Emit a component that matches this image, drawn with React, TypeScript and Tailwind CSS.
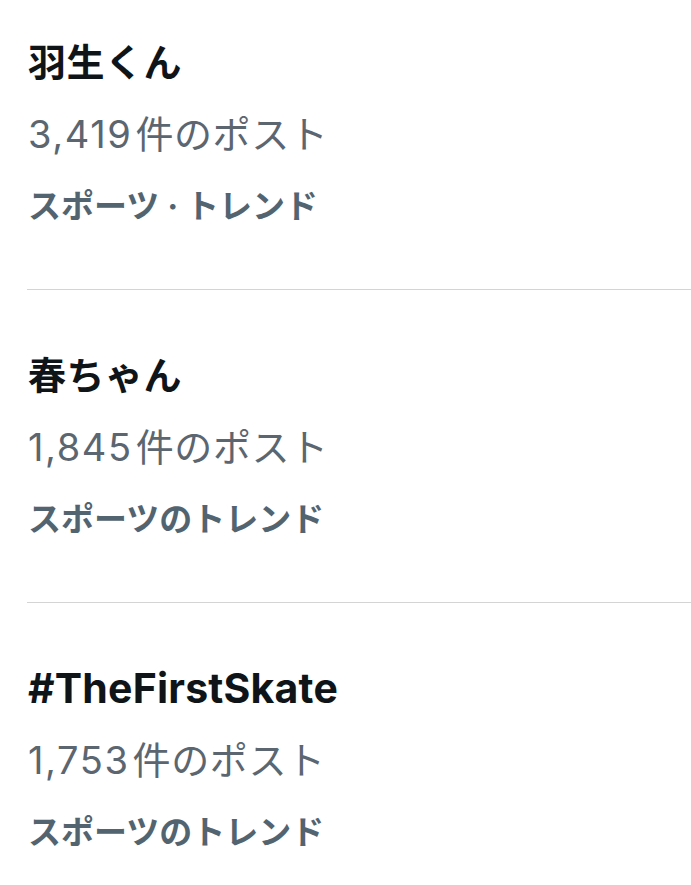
const trends = [
  { title: "羽生くん", count: "3,419", category: "スポーツ · トレンド", latin: false },
  { title: "春ちゃん", count: "1,845", category: "スポーツのトレンド", latin: false },
  { title: "#TheFirstSkate", count: "1,753", category: "スポーツのトレンド", latin: true },
];

const font = "font-['Inter','Noto_Sans_CJK_JP',sans-serif]";

export default function App() {
  return (
    <div className={`min-h-[885px] w-[691px] overflow-hidden bg-white ${font}`}>
      {trends.map((t, idx) => (
        <div key={idx}>
          {idx > 0 && <div className="ml-[27px] h-px bg-[#d4d4d4]" />}
          <div className={`pl-[28px] ${idx === 0 ? "pt-[26px]" : "pt-[49px]"} pb-[47px]`}>
            <div
              className={`h-[72px] leading-[72px] font-bold text-[#0f1419] ${
                t.latin ? "text-[41px] tracking-[0.2px]" : "text-[38px] tracking-[0.5px]"
              }`}
            >
              {t.title}
            </div>
            <div className="h-[72px] text-[38px] leading-[72px] text-[#5b6670]">
              <span className="tracking-[1.6px]">{t.count}</span>
              <span className="ml-[3px] tracking-[0.6px]">件のポスト</span>
            </div>
            <div className="h-[72px] text-[33px] leading-[72px] font-bold text-[#536471]">
              {t.category}
            </div>
          </div>
        </div>
      ))}
    </div>
  );
}
